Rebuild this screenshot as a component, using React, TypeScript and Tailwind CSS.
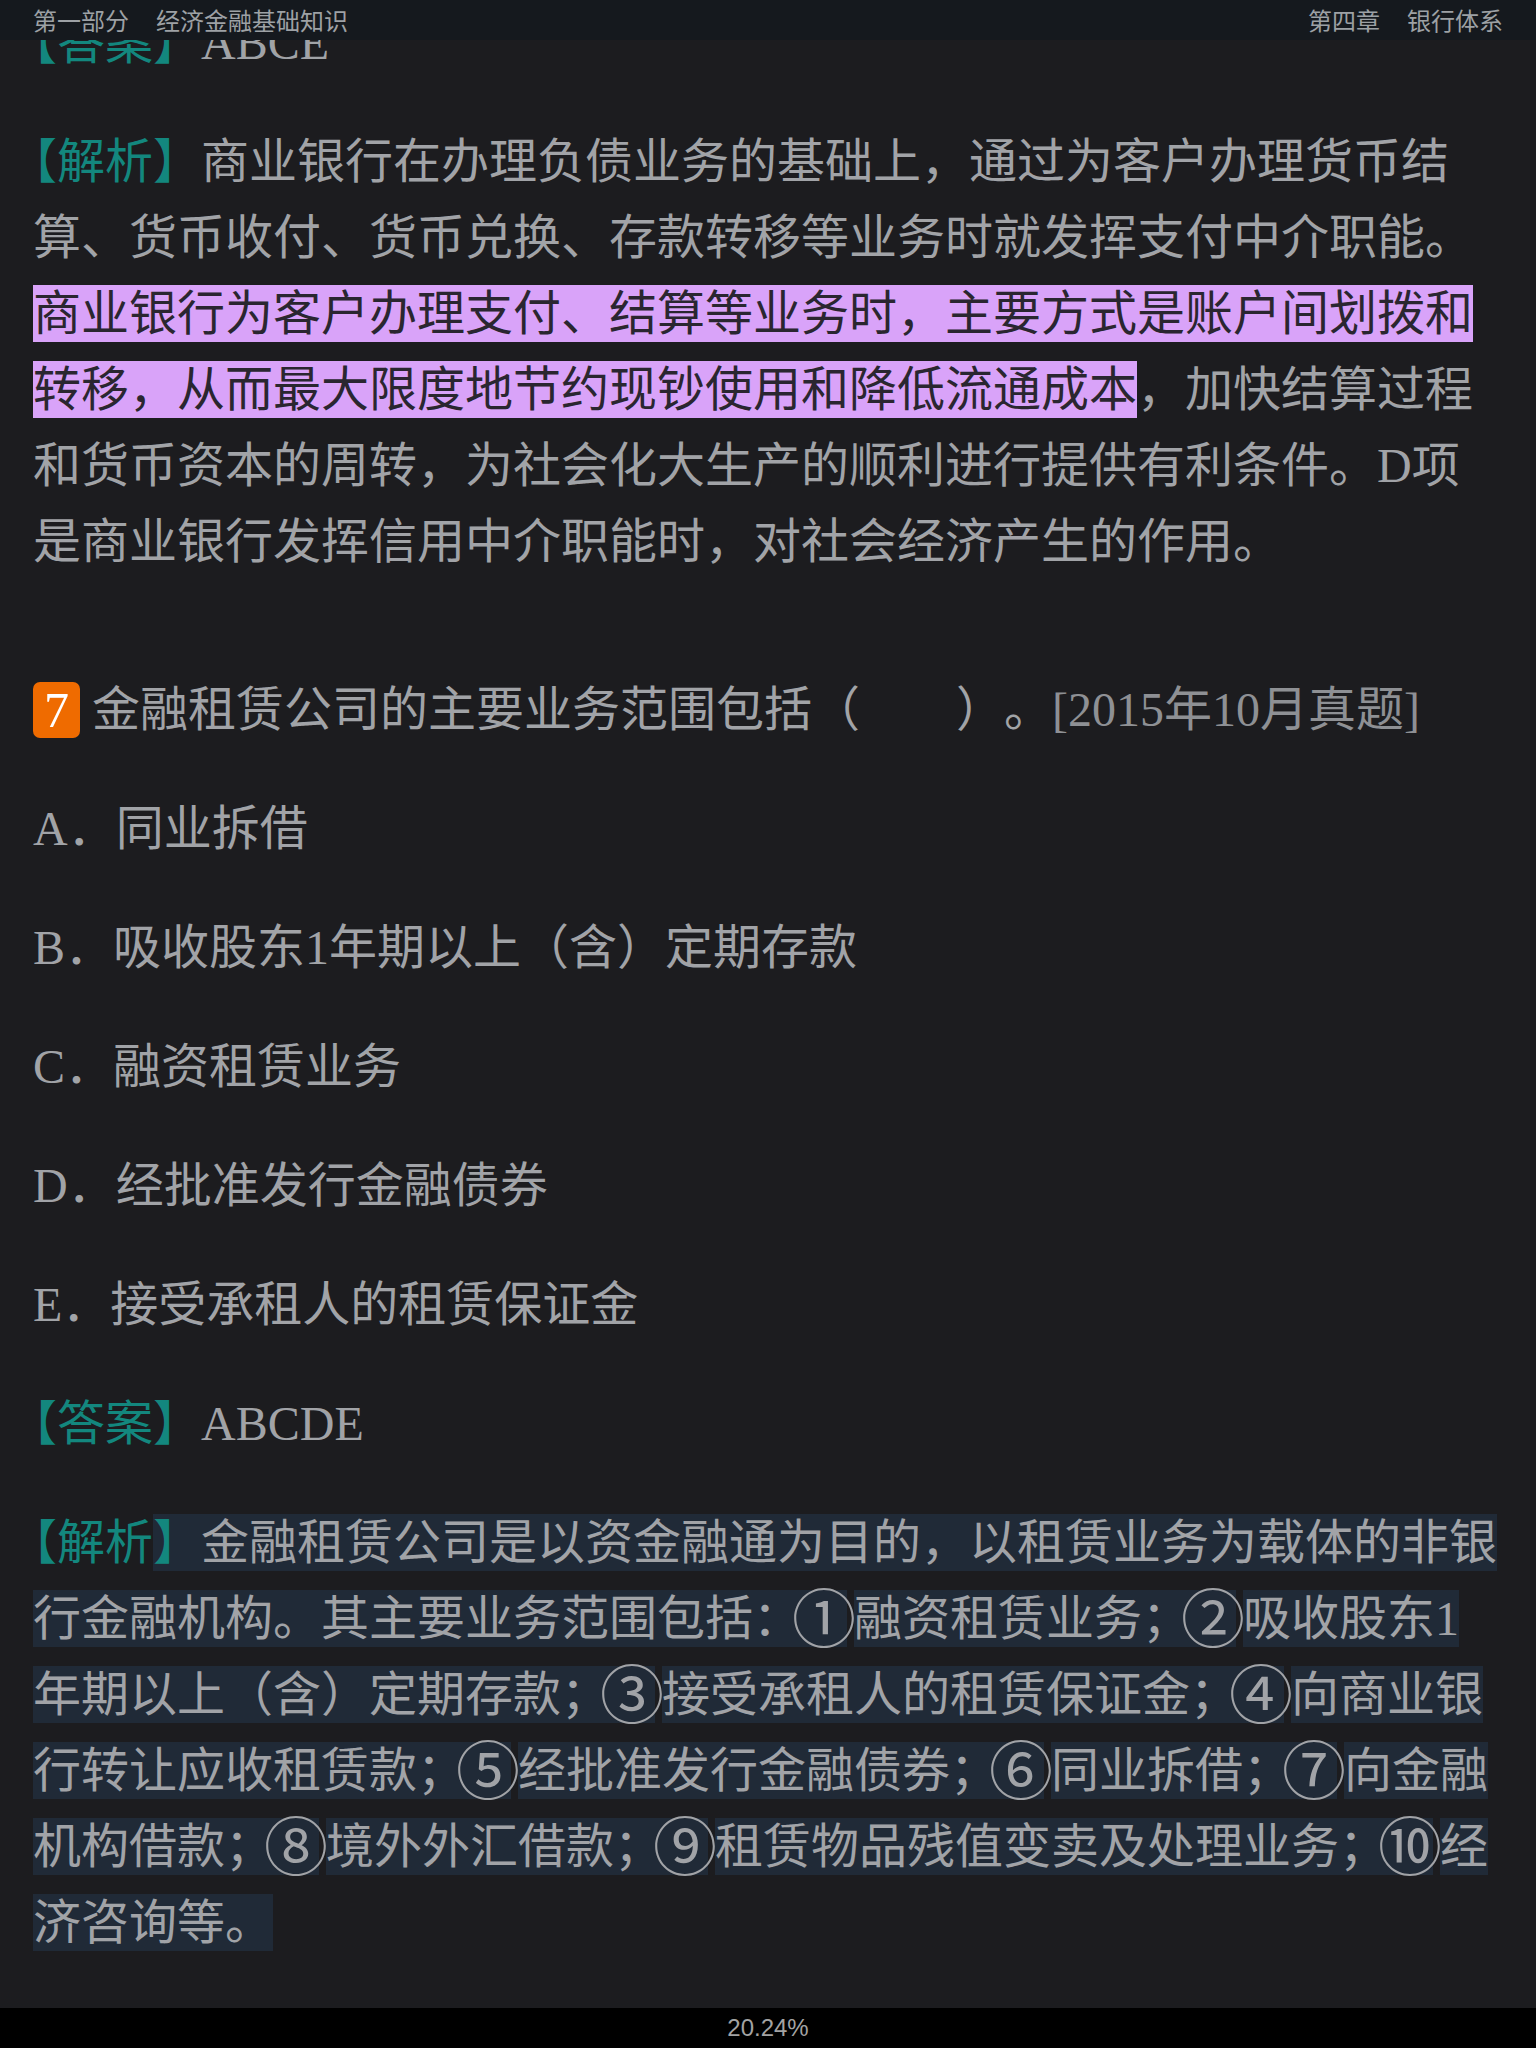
import React from "react";

const options: [string, string][] = [
  ["A", "同业拆借"],
  ["B", "吸收股东1年期以上（含）定期存款"],
  ["C", "融资租赁业务"],
  ["D", "经批准发行金融债券"],
  ["E", "接受承租人的租赁保证金"],
];

function Tag({ children }: { children: string }) {
  return <span className="text-[#13877e]">【{children}】</span>;
}

// blue-grey note highlight, one box per run
function Seg({ children, last = false }: { children: React.ReactNode; last?: boolean }) {
  return (
    <span className={last ? "bg-[#202a37] py-[2px]" : "bg-[#202a37] py-[2px] mr-[7px]"}>
      {children}
    </span>
  );
}

// circled numbers are drawn full-height in the reader font
function Num({ children }: { children: string }) {
  return (
    <span className="inline-flex justify-center w-[46px] text-[64px] leading-none align-[-7px] font-['Noto_Sans_CJK_SC',sans-serif]">
      {children}
    </span>
  );
}

export default function App() {
  return (
    <div lang="zh-CN" className="h-[2048px] w-full flex flex-col bg-[#1c1c1f] overflow-hidden">
      <div className="relative flex-1 overflow-hidden">
        {/* Top bar */}
        <header className="absolute inset-x-0 top-0 z-10 h-10 bg-[#15191e] flex items-center justify-between px-[33px] text-[24px] leading-none text-[#9da1a5] font-['Noto_Sans_CJK_SC',sans-serif]">
          <div className="flex gap-[27px]">
            <span>第一部分</span>
            <span>经济金融基础知识</span>
          </div>
          <div className="flex gap-[27px]">
            <span>第四章</span>
            <span>银行体系</span>
          </div>
        </header>

        <main className="px-[33px] pt-[5px] flex flex-col gap-[43px] text-[48px] leading-[76px] whitespace-nowrap text-[#a1a3a7] font-['Liberation_Serif','Noto_Sans_CJK_SC',serif]">
          <p className="[text-spacing-trim:trim-start]">
            <Tag>答案</Tag>ABCE
          </p>

          <p className="[text-spacing-trim:trim-start]">
            <Tag>解析</Tag>商业银行在办理负债业务的基础上，通过为客户办理货币结
            <br />
            算、货币收付、货币兑换、存款转移等业务时就发挥支付中介职能。
            <br />
            <span className="bg-[#d9a3f9] text-[#2a2630] py-[2px]">
              商业银行为客户办理支付、结算等业务时，主要方式是账户间划拨和
              <br />
              转移，从而最大限度地节约现钞使用和降低流通成本
            </span>
            ，加快结算过程
            <br />
            和货币资本的周转，为社会化大生产的顺利进行提供有利条件。D项
            <br />
            是商业银行发挥信用中介职能时，对社会经济产生的作用。
          </p>

          {/* Question 7 */}
          <div className="mt-[49px] flex items-center gap-[12px]">
            <span className="w-[47px] h-[56px] rounded-[7px] bg-[#ef6b00] text-white flex items-center justify-center text-[50px] leading-none">
              7
            </span>
            <p className="[text-spacing-trim:space-all]">
              金融租赁公司的主要业务范围包括（　　）。
              <span className="text-[#8e9094]">[2015年10月真题]</span>
            </p>
          </div>

          {options.map(([k, v]) => (
            <p key={k}>
              {k}．{v}
            </p>
          ))}

          <p className="[text-spacing-trim:trim-start]">
            <Tag>答案</Tag>ABCDE
          </p>

          <p className="[text-spacing-trim:trim-start]">
            <span className="text-[#13877e]">【解析</span>
            <Seg>
              <span className="text-[#13877e]">】</span>金融租赁公司是以资金融通为目的，以租赁业务为载体的非银
              <br />
              行金融机构。其主要业务范围包括：<Num>①</Num>
            </Seg>
            <Seg>融资租赁业务；<Num>②</Num></Seg>
            <Seg>
              吸收股东1
              <br />
              年期以上（含）定期存款；<Num>③</Num>
            </Seg>
            <Seg>接受承租人的租赁保证金；<Num>④</Num></Seg>
            <Seg>
              向商业银
              <br />
              行转让应收租赁款；<Num>⑤</Num>
            </Seg>
            <Seg>经批准发行金融债券；<Num>⑥</Num></Seg>
            <Seg>同业拆借；<Num>⑦</Num></Seg>
            <Seg>
              向金融
              <br />
              机构借款；<Num>⑧</Num>
            </Seg>
            <Seg>境外外汇借款；<Num>⑨</Num></Seg>
            <Seg>租赁物品残值变卖及处理业务；<Num>⑩</Num></Seg>
            <Seg last>
              经
              <br />
              济咨询等。
            </Seg>
          </p>
        </main>
      </div>

      <footer className="h-10 shrink-0 bg-black flex items-center justify-center text-[24px] leading-none text-[#a3a3a3] font-['Liberation_Sans',sans-serif]">
        20.24%
      </footer>
    </div>
  );
}
